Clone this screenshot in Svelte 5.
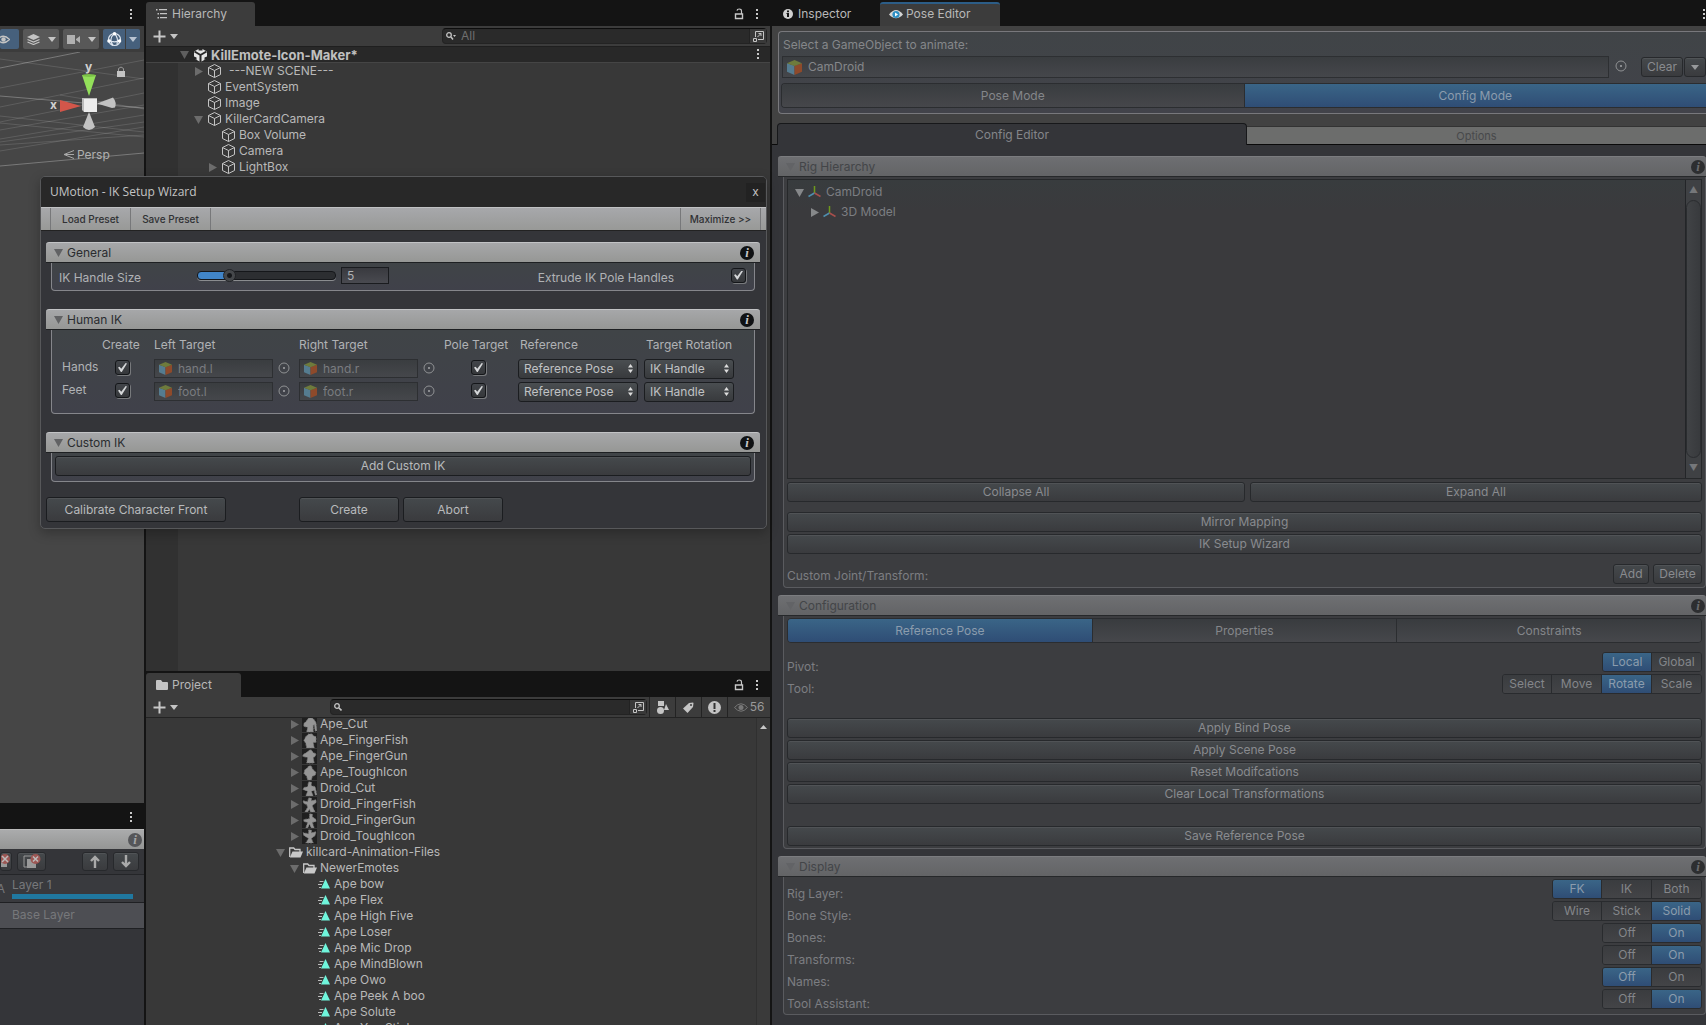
<script>
  const hierarchy = [
    { name: '---NEW SCENE---', level: 1, arrow: 'right', spaced: true },
    { name: 'EventSystem', level: 1 },
    { name: 'Image', level: 1 },
    { name: 'KillerCardCamera', level: 1, arrow: 'down' },
    { name: 'Box Volume', level: 2 },
    { name: 'Camera', level: 2 },
    { name: 'LightBox', level: 2, arrow: 'right' },
  ];

  const models = [
    ['Ape_Cut', 'M5 4l2-3h4l2 2 2 3 1 9h-2l-1-7-1 1v7H5l1-5-4-1v-3z'],
    ['Ape_FingerFish', 'M4 4l3-3h4l1 2 3 1v6h-3l1 6H5l-1-5-2-3z'],
    ['Ape_FingerGun', 'M6 3l2-2h2l2 3 3 1-1 3-2 1 1 6H5l1-6-5-1V6z'],
    ['Ape_ToughIcon', 'M6 3l1-2h3l1 3 4 4-1 3-3 1-1 4H6l-1-4-3-3 1-4z'],
    ['Droid_Cut', 'M7 1h3v4l4 1 2 9h-2l-1-5-3 1 2 5H4l2-5-5-2 1-2 4-1z'],
    ['Droid_FingerFish', 'M7 1h3v3l5-1v3l-4 3 1 3 2 4H9l-1-3-2 3H3l3-5-1-3-3-1-1-3 5 1z'],
    ['Droid_FingerGun', 'M8 1h3v3l4 3v2l-4 1 2 6h-3l-2-4-2 4H4l2-6-4-1V7l6-1z'],
    ['Droid_ToughIcon', 'M7 1h3v3l5-1-1 4-4 3 2 5H4l3-5-5-3-1-3 6 1z'],
  ];

  const clips = [
    'Ape bow', 'Ape Flex', 'Ape High Five', 'Ape Loser', 'Ape Mic Drop',
    'Ape MindBlown', 'Ape Owo', 'Ape Peek A boo', 'Ape Solute', 'Ape You Stink',
  ];

  const limbs = [
    { name: 'Hands', left: 'hand.l', right: 'hand.r' },
    { name: 'Feet', left: 'foot.l', right: 'foot.r' },
  ];

  const display = [
    { label: 'Rig Layer:', options: ['FK', 'IK', 'Both'], on: 'FK' },
    { label: 'Bone Style:', options: ['Wire', 'Stick', 'Solid'], on: 'Solid' },
    { label: 'Bones:', options: ['Off', 'On'], on: 'On' },
    { label: 'Transforms:', options: ['Off', 'On'], on: 'On' },
    { label: 'Names:', options: ['Off', 'On'], on: 'Off' },
    { label: 'Tool Assistant:', options: ['Off', 'On'], on: 'On' },
  ];

  const pivots = [
    { label: 'Pivot:', options: ['Local', 'Global'], on: 'Local' },
    { label: 'Tool:', options: ['Select', 'Move', 'Rotate', 'Scale'], on: 'Rotate' },
  ];
</script>

{#snippet kebab()}
  <button class="bare kebab" aria-label="More">
    <svg width="3" height="11" viewBox="0 0 3 11"><path d="M0 0h2v2H0zM0 4h2v2H0zM0 8h2v2H0z" fill="#c8c8c8" /></svg>
  </button>
{/snippet}

{#snippet lock()}
  <button class="bare" aria-label="Lock">
    <svg width="10" height="12" viewBox="0 0 10 12" fill="none" stroke="#c8c8c8"><path d="M1.500 6h7v4.500h-7z" stroke-width="1.400" /><path d="M7.500 6V3.200Q7.500 1 5.200 1 3.200 1 3 2.600" stroke-width="1.200" /></svg>
  </button>
{/snippet}

{#snippet cube()}
  <svg width="15" height="16" viewBox="0 0 15 16" fill="none" stroke="#c4c4c4"><path d="M7.500 1.500L13.500 4.500v7l-6 3-6-3v-7zM1.500 4.500l6 3 6-3M7.500 7.500v7" stroke-linejoin="round" /></svg>
{/snippet}

{#snippet prefab(size)}
  <svg width={size} height={size} viewBox="0 0 16 16"><path d="M0 3.500L8 6v10l-8-3.500z" fill="#557c90" /><path d="M16 3.500L8 6v10l8-3.500z" fill="#8e4a2b" /><path d="M8 0l8 3.500L8 6.500 0 3.500z" fill="#6e7b3c" /></svg>
{/snippet}

{#snippet arrow(dir)}
  <svg class="arrow" width="9" height="9" viewBox="0 0 9 9"><path d={dir === 'down' ? 'M0 1h9L4.500 9z' : 'M1 0v9l8-4.500z'} fill="currentColor" /></svg>
{/snippet}

{#snippet drop(color)}
  <svg width="8" height="5" viewBox="0 0 8 5"><path d="M0 0h8L4 5z" fill={color} /></svg>
{/snippet}

{#snippet picker()}
  <button class="bare" aria-label="Pick object">
    <svg width="12" height="12" viewBox="0 0 12 12"><circle cx="6" cy="6" r="5" fill="none" stroke="#909294" /><circle cx="6" cy="6" r="1" fill="#a4a6a8" /></svg>
  </button>
{/snippet}

{#snippet info()}
  <button class="info" aria-label="Help"><i>i</i></button>
{/snippet}

{#snippet axes()}
  <svg width="13" height="12" viewBox="0 0 13 12" fill="none" stroke-width="1.500"><path d="M6.500 7V0" stroke="#6f9a1c" /><path d="M6.500 7L.5 10.500" stroke="#4f8fae" /><path d="M6.500 7l6 3.500" stroke="#a84f4c" /></svg>
{/snippet}

{#snippet popout()}
  <button class="bare" aria-label="Open search window">
    <svg width="13" height="13" viewBox="0 0 13 13" fill="none" stroke="#c4c4c4"><path d="M3.500 7V1.500h8v8H6" /><path d="M1.500 8.500h3v3h-3z" /><path d="M5.500 7l3.500-3.500M6.500 3.500H9V6" /></svg>
  </button>
{/snippet}

{#snippet plus()}
  <button class="bare plus" aria-label="Create">
    <svg width="13" height="13" viewBox="0 0 13 13"><path d="M6.500 .5v12M.5 6.500h12" stroke="#c8c8c8" stroke-width="2" /></svg>
    {@render drop('#c4c4c4')}
  </button>
{/snippet}

{#snippet segments(row)}
  <div class="segments">
    {#each row.options as option}
      <button class:on={option === row.on}>{option}</button>
    {/each}
  </div>
{/snippet}

<main>
  <section class="scene">
    <div class="strip end">{@render kebab()}</div>
    <div class="tools">
      <button class="tool blue first" aria-label="Visibility"><svg width="13" height="9" viewBox="0 0 13 9"><path d="M.5 4.500Q6-2 12.500 4.500 6 11 .5 4.500z" fill="none" stroke="#c4c4c4" stroke-width="1.300" /><circle cx="6.500" cy="4.500" r="2.200" fill="#c4c4c4" /></svg></button>
      <button class="tool" aria-label="Layers"><svg width="13" height="11" viewBox="0 0 13 11"><path d="M6.500 0L13 3 6.500 6 0 3z" fill="#c4c4c4" /><path d="M.5 5.500l6 2.500 6-2.500M.5 8l6 2.500 6-2.500" fill="none" stroke="#c4c4c4" stroke-width="1.200" /></svg>{@render drop('#c4c4c4')}</button>
      <button class="tool" aria-label="Camera"><svg width="13" height="9" viewBox="0 0 13 9"><path d="M0 0h8v9H0zM9 4l4-3v7L9 5z" fill="#b0b0b0" /></svg>{@render drop('#c4c4c4')}</button>
      <div class="pair">
        <button class="tool blue" aria-label="Gizmos"><svg width="15" height="15" viewBox="0 0 15 15" fill="none" stroke="#dce4ee" stroke-width="1.200"><circle cx="7.500" cy="7.500" r="6" /><path d="M7.500 1.500C3 5 3 10 6 13.500M7.500 1.500c3 3 3.500 7 2.500 11M1.500 8c4 2.500 8 2.500 12 0" /><g fill="#fff" stroke="none"><circle cx="7.500" cy="1.800" r="1.800" /><circle cx="2" cy="9" r="1.800" /><circle cx="12.500" cy="9" r="1.800" /></g></svg></button>
        <button class="tool blue" aria-label="Gizmo options">{@render drop('#b9c4d2')}</button>
      </div>
    </div>
    <div class="view">
      <svg class="grid" viewBox="0 0 144 120" preserveAspectRatio="none" fill="none" stroke="#fff" stroke-width="1">
        <path opacity=".28" d="M0 16L80 0M0 44l144 12M0 114l144-13" />
        <path opacity=".13" d="M0 7l144 20M0 36L144 8M0 55L144 26M0 70L144 41M0 78l144-25M0 87l144-24M0 99l144-24M0 90l144-20M0 71l144 14M0 64l144 16M0 93l144-10M60 43l84 14" />
      </svg>
      <svg class="gizmo" width="144" height="120" viewBox="0 0 144 120">
        <path d="M82 23h14l-7 21z" fill="#93e05a" /><ellipse cx="89" cy="23.500" rx="7" ry="1.500" fill="#7cc348" />
        <path d="M60 48v12l21-6z" fill="#d2564a" />
        <path d="M97 51.500l16-6q4 5 2 10l-3 .5z" fill="#c2c2c2" />
        <path d="M89 60l-6 15q6 6 12 0z" fill="#c2c2c2" />
        <path d="M82 46h15v14H84l-2-2z" fill="#bbb" /><path d="M84 47h13v13H84z" fill="#ececec" />
        <g class="axis"><text x="85" y="19">y</text><text x="50" y="57">x</text></g>
        <path d="M117 19h8v6h-8z" fill="#c4c4c4" /><path d="M118.500 19v-2.500q2.500-3 5 0V19" fill="none" stroke="#999" />
        <path d="M74 98.500l-10 4 10 4M64 102.500h10" fill="none" stroke="#a8a8a8" />
        <text class="persp" x="77" y="107">Persp</text>
      </svg>
    </div>
    <div class="strip end">{@render kebab()}</div>
    <div class="layers">
      <div class="layerhead">{@render info()}</div>
      <div class="layertools">
        <button class="btn cut" aria-label="Delete layer"><svg width="10" height="16" viewBox="0 0 10 16"><path d="M0 6h6v7H0z" fill="#999" /><circle cx="4" cy="5" r="5" fill="#9c5754" /><path d="M1 2l6 6M7 2L1 8" stroke="#bbb" stroke-width="1.500" /></svg></button>
        <button class="btn two" aria-label="Delete all layers"><svg width="18" height="16" viewBox="0 0 18 16"><path d="M1 2h9v11H1z" fill="none" stroke="#999" /><path d="M4 5h9v9H4z" fill="#999" /><circle cx="12.500" cy="5" r="5" fill="#9c5754" /><path d="M10 2.500l5 5M15 2.500l-5 5" stroke="#bbb" stroke-width="1.500" /></svg></button>
        <button class="btn up" aria-label="Move up"><svg width="10" height="13" viewBox="0 0 10 13"><path d="M5 13V2M1 6l4-4 4 4" fill="none" stroke="#aaa" stroke-width="2.400" /></svg></button>
        <button class="btn" aria-label="Move down"><svg width="10" height="13" viewBox="0 0 10 13"><path d="M5 0v11M1 7l4 4 4-4" fill="none" stroke="#aaa" stroke-width="2.400" /></svg></button>
      </div>
      <div class="layer"><b>A</b><div><span>Layer 1</span><hr /></div></div>
      <div class="layer base"><span>Base Layer</span></div>
    </div>
  </section>

  <section class="middle">
    <div class="strip">
      <button class="tab"><svg width="11" height="10" viewBox="0 0 11 10"><path d="M0 0h1.500v1.500H0zM3 0h8v1.300H3zM1.500 4H3v1.500H1.500zM4 4h7v1.300H4zM1.500 8H3v1.500H1.500zM4 8h7v1.300H4z" fill="#c4c4c4" /></svg>Hierarchy</button>
      <span class="fill"></span>{@render lock()}{@render kebab()}
    </div>
    <div class="bar">
      {@render plus()}
      <div class="search hs">
        <svg width="10" height="8" viewBox="0 0 10 8" fill="none" stroke="#c4c4c4"><circle cx="3" cy="3" r="2.300" stroke-width="1.300" /><path d="M5 5l2 2.500" stroke-width="1.500" /><path d="M7 3h3L8.500 5z" fill="#c4c4c4" stroke="none" /></svg>
        <input placeholder="All" aria-label="Search hierarchy" />{@render popout()}
      </div>
    </div>
    <div class="sceneRow">
      {@render arrow('down')}
      <svg width="13" height="14" viewBox="0 0 13 14"><path d="M6.500 0L13 3.500v7L6.500 14 0 10.500v-7z" fill="#e6e6e6" /><path d="M6.500 7V14M6.500 7L.5 3.500M6.500 7l6-3.500" stroke="#282828" stroke-width="2" /><path d="M4.500 0h4v2.500h-4zM0 8.500l2.500 1V12L0 11zM13 8.500l-2.500 1V12l2.500-1z" fill="#282828" /></svg>
      <strong>KillEmote-Icon-Maker*</strong><span class="fill"></span>{@render kebab()}
    </div>
    <ul class="tree hierarchy">
      {#each hierarchy as row}
        <li class="level{row.level}">
          <span class="slot">{#if row.arrow}{@render arrow(row.arrow)}{/if}</span>{@render cube()}<span class:spaced={row.spaced}>{row.name}</span>
        </li>
      {/each}
    </ul>
    <div class="strip">
      <button class="tab project"><svg width="12" height="10" viewBox="0 0 12 10"><path d="M0 1q0-1 1-1h4l1.500 2H11q1 0 1 1v6q0 1-1 1H1q-1 0-1-1z" fill="#c4c4c4" /></svg>Project</button>
      <span class="fill"></span>{@render lock()}{@render kebab()}
    </div>
    <div class="bar">
      {@render plus()}
      <div class="search ps">
        <svg width="8" height="8" viewBox="0 0 8 8" fill="none" stroke="#c4c4c4"><circle cx="3" cy="3" r="2.300" stroke-width="1.300" /><path d="M5 5l2.500 2.500" stroke-width="1.600" /></svg>
        <input aria-label="Search project" />{@render popout()}
      </div>
      <div class="filters">
        <button class="bare" aria-label="Filter by type"><svg width="12" height="13" viewBox="0 0 12 13" fill="#c4c4c4"><path d="M1 0h6v5H1zM9 3l3 6H7z" /><circle cx="3.500" cy="9.500" r="3.500" /></svg></button>
        <button class="bare" aria-label="Filter by label"><svg width="11" height="11" viewBox="0 0 11 11"><path d="M6 1l4-.5.5.5L10 5l-5.500 6L0 6.500z" fill="#c4c4c4" /><circle cx="8" cy="3" r="1" fill="#3c3c3c" /></svg></button>
        <button class="bare" aria-label="Filter by problem"><svg width="13" height="13" viewBox="0 0 13 13"><circle cx="6.500" cy="6.500" r="6.500" fill="#c4c4c4" /><path d="M5.500 2h2v6h-2zM5.500 9h2v2h-2z" fill="#333" /></svg></button>
        <button class="bare count"><svg width="14" height="9" viewBox="0 0 14 9"><path d="M.5 4.500Q7-3 13.500 4.500 7 12 .5 4.500z" fill="none" stroke="#777" /><circle cx="7" cy="4.500" r="2.500" fill="#777" /></svg>56</button>
      </div>
    </div>
    <div class="project-body">
      <ul class="tree files">
        {#each models as [name, shape]}
          <li class="model"><span class="slot">{@render arrow('right')}</span>
            <svg class="thumb" width="15" height="15" viewBox="0 0 16 16"><path d={shape} fill="#959595" stroke="#777" stroke-width=".8" stroke-dasharray="2 1" /></svg><span>{name}</span></li>
        {/each}
        {#each ['killcard-Animation-Files', 'NewerEmotes'] as name, i}
          <li class={i ? 'folder inner' : 'folder'}><span class="slot">{@render arrow('down')}</span>
            <svg width="14" height="11" viewBox="0 0 14 11"><path d="M.7 10V1h4l1.300 1.500h5V5" fill="none" stroke="#c8c8c8" stroke-width="1.300" /><path d="M3.500 4.500H14L11.500 10.500H.8z" fill="#c8c8c8" /></svg><span>{name}</span></li>
        {/each}
        {#each clips as name}
          <li class="clip"><svg width="12" height="10" viewBox="0 0 12 10"><path d="M1.500 2.500h4M0 5.500h4M1 8.500h2" stroke="#bbb" /><path d="M7.500 0L12 9.500H3z" fill="#6ff5dc" /></svg><span>{name}</span></li>
        {/each}
      </ul>
      <div class="gutter"><svg width="7" height="4" viewBox="0 0 7 4"><path d="M0 4h7L3.500 0z" fill="#c8c8c8" /></svg></div>
    </div>
  </section>

  <section class="pose">
    <div class="strip">
      <button class="tab plain"><svg width="10" height="10" viewBox="0 0 10 10"><circle cx="5" cy="5" r="5" fill="#d0d0d0" /><path d="M4 1.500h2v1.700H4zM3.500 4H6v4H4V5h-.5z" fill="#141414" /></svg>Inspector</button>
      <button class="tab active"><svg width="14" height="10" viewBox="0 0 14 10"><path d="M0 5.500Q7-3.500 14 5.500 7 13 0 5.500z" fill="#d6d6d6" /><circle cx="7" cy="5.500" r="3.600" fill="#2d8fc4" /><path d="M6 3.500l3 2-3 2z" fill="#fff" /></svg>Pose Editor</button>
      <span class="fill"></span>{@render kebab()}
    </div>
    <div class="top">
      <div class="target">
        <label for="target">Select a GameObject to animate:</label>
        <div class="line">
          <span class="object big">{@render prefab(15)}<input id="target" value="CamDroid" readonly /></span>
          {@render picker()}
          <button class="btn clear">Clear</button>
          <button class="btn more" aria-label="Recent objects">{@render drop('#97999b')}</button>
        </div>
        <div class="modes"><button>Pose Mode</button><button class="on">Config Mode</button></div>
      </div>
      <div class="pages"><button class="current">Config Editor</button><button>Options</button></div>
    </div>
    <div class="config">
      <div class="head">{@render arrow('down')}<span>Rig Hierarchy</span>{@render info()}</div>
      <div class="box">
        <div class="rig">
          <ul>
            <li>{@render arrow('down')}{@render axes()}<span>CamDroid</span></li>
            <li class="child">{@render arrow('right')}{@render axes()}<span>3D Model</span></li>
          </ul>
          <div class="scroll"><button aria-label="Scroll up">▲</button><span class="knob"></span><button aria-label="Scroll down">▼</button></div>
        </div>
        <div class="split"><button class="btn">Collapse All</button><button class="btn">Expand All</button></div>
        <div class="stack"><button class="btn">Mirror Mapping</button><button class="btn">IK Setup Wizard</button></div>
        <div class="joint"><span>Custom Joint/Transform:</span><button class="btn add">Add</button><button class="btn delete">Delete</button></div>
      </div>
      <div class="head">{@render arrow('down')}<span>Configuration</span>{@render info()}</div>
      <div class="box">
        <div class="modes three"><button class="on">Reference Pose</button><button>Properties</button><button>Constraints</button></div>
        <div class="options">
          {#each pivots as row}<div class="option"><span>{row.label}</span>{@render segments(row)}</div>{/each}
        </div>
        <div class="stack poses">
          <button class="btn">Apply Bind Pose</button><button class="btn">Apply Scene Pose</button>
          <button class="btn">Reset Modifcations</button><button class="btn">Clear Local Transformations</button>
        </div>
        <div class="stack"><button class="btn">Save Reference Pose</button></div>
      </div>
      <div class="head">{@render arrow('down')}<span>Display</span>{@render info()}</div>
      <div class="box">
        <div class="options last">
          {#each display as row}<div class="option"><span>{row.label}</span>{@render segments(row)}</div>{/each}
        </div>
      </div>
    </div>
  </section>

  <section class="wizard" aria-label="UMotion - IK Setup Wizard">
    <header><h1>UMotion - IK Setup Wizard</h1><button class="bare" aria-label="Close">x</button></header>
    <nav><i></i><button>Load Preset</button><button>Save Preset</button><span class="fill"></span><button class="max">Maximize &gt;&gt;</button><i></i></nav>
    <div class="content">
      <div class="head">{@render arrow('down')}<span>General</span>{@render info()}</div>
      <div class="box general">
        <label for="size">IK Handle Size</label>
        <input id="size" type="range" min="0" max="25" value="5" />
        <input class="number" value="5" aria-label="IK Handle Size value" />
        <span class="fill"></span>
        <label for="extrude">Extrude IK Pole Handles</label>
        <input id="extrude" type="checkbox" checked />
      </div>
      <div class="head">{@render arrow('down')}<span>Human IK</span>{@render info()}</div>
      <div class="box human">
        <table>
          <colgroup><col class="c1" /><col class="c2" /><col class="c3" /><col class="c3" /><col class="c4" /><col class="c5" /><col /></colgroup>
          <thead><tr><td></td><th>Create</th><th>Left Target</th><th>Right Target</th><th>Pole Target</th><th>Reference</th><th>Target Rotation</th></tr></thead>
          <tbody>
            {#each limbs as limb}
              <tr>
                <th>{limb.name}</th>
                <td class="mid"><input type="checkbox" checked aria-label="Create {limb.name}" /></td>
                {#each [limb.left, limb.right] as bone}
                  <td><div class="pick"><span class="object">{@render prefab(13)}<input value={bone} readonly aria-label="Target {bone}" /></span>{@render picker()}</div></td>
                {/each}
                <td class="mid pole"><input type="checkbox" checked aria-label="Pole target {limb.name}" /></td>
                <td><div class="select"><select aria-label="Reference {limb.name}"><option>Reference Pose</option></select><svg width="5" height="9" viewBox="0 0 5 9"><path d="M0 3.500L2.500 0 5 3.500zM0 5.500h5L2.500 9z" fill="#ddd" /></svg></div></td>
                <td><div class="select narrow"><select aria-label="Target rotation {limb.name}"><option>IK Handle</option></select><svg width="5" height="9" viewBox="0 0 5 9"><path d="M0 3.500L2.500 0 5 3.500zM0 5.500h5L2.500 9z" fill="#ddd" /></svg></div></td>
              </tr>
            {/each}
          </tbody>
        </table>
      </div>
      <div class="head">{@render arrow('down')}<span>Custom IK</span>{@render info()}</div>
      <div class="box custom"><button class="btn">Add Custom IK</button></div>
      <footer><button class="btn calibrate">Calibrate Character Front</button><button class="btn">Create</button><button class="btn">Abort</button></footer>
    </div>
  </section>
</main>

<style>
  :global(body) { background: #141414; }
  main, main * { box-sizing: border-box; }
  main {
    position: relative; display: grid; grid-template-columns: 144fr 624fr 934fr; gap: 2px;
    height: 100vh; overflow: hidden; background: #141414; color: #b8b8b8;
    font: 12px/16px Inter, "Liberation Sans", sans-serif;
  }
  button, input, select { font: inherit; color: inherit; margin: 0; padding: 0; border: 0; background: none; min-width: 0; }
  button { white-space: nowrap; }
  svg { display: block; flex: none; }
  ul { list-style: none; margin: 0; padding: 0; }
  section { display: flex; flex-direction: column; min-width: 0; min-height: 0; overflow: hidden; }
  .fill { flex: 1; }
  .bare { display: flex; align-items: center; justify-content: center; }

  .strip { display: flex; align-items: flex-end; flex: none; height: 26px; background: #141414; }
  .strip .bare { height: 24px; }
  .strip .kebab { margin: 0 11px 0 12px; }
  .end { justify-content: flex-end; }
  .tab { display: flex; align-items: center; gap: 5px; width: 109px; height: 24px; padding: 0 0 0 10px; border-radius: 3px 3px 0 0; background: #3c3c3c; }
  .tab.project { width: 95px; gap: 4px; }

  .tools { display: flex; align-items: center; gap: 4px; flex: none; height: 26px; background: #3c3c3c; }
  .tool { display: flex; align-items: center; justify-content: center; gap: 8px; width: 36px; height: 20px; border-radius: 2px; background: #585858; }
  .tool.blue { background: #46607c; }
  .tool.first { width: 19px; justify-content: flex-start; overflow: hidden; }
  .tool.first svg { margin-left: -3px; }
  .pair { display: flex; gap: 1px; }
  .pair .tool { width: 22px; border-radius: 2px 0 0 2px; }
  .pair .tool:last-child { width: 14px; border-radius: 0 2px 2px 0; }
  .view { display: grid; flex: 1; align-items: start; background: #464646; min-height: 0; }
  .view svg { grid-area: 1 / 1; }
  .grid { width: 100%; height: 120px; }
  .gizmo text { font-size: 12px; fill: #b0b0b0; }
  .gizmo .axis text { font-weight: 700; fill: #d0d0d0; }
  .layers { flex: none; height: 196px; background: #343539; color: #77787b; }
  .layerhead { display: flex; align-items: center; justify-content: flex-end; height: 20px; padding-right: 2px; background: linear-gradient(#aaabac, #959695); border-top: 1px solid #bbb; }
  .layerhead .info { background: #555659; color: #a5a6a7; }
  .layertools { display: flex; gap: 5px; height: 26px; padding: 3px 5px 4px 0; border-bottom: 1px solid #242528; }
  .layertools .btn { width: 26px; height: 19px; }
  .layertools .cut { width: 11px; }
  .layertools .two { width: 29px; }
  .layertools .up { margin-left: auto; }
  .layer { display: flex; height: 28px; padding: 2px 11px 0 0; gap: 7px; border-bottom: 1px solid #1f2023; background: #393a3e; }
  .layer b { width: 5px; font-weight: 400; display: flex; justify-content: flex-end; padding-top: 4px; }
  .layer div { flex: 1; }
  .layer hr { height: 5px; margin: 1px 0 0; border: 0; background: #2078a0; }
  .layer.base { background: #4d4e53; padding: 4px 0 0 12px; height: 26px; }

  .bar { display: flex; align-items: center; flex: none; height: 20px; background: #3c3c3c; }
  .plus { gap: 4px; padding-left: 7px; }
  .search { display: flex; align-items: center; gap: 5px; height: 16px; border-radius: 4px; border: 1px solid #232323; border-top-color: #0d0d0d; background: #2a2a2a; }
  .search > svg { margin-left: 3px; }
  .search input { flex: 1; outline: 0; height: 14px; }
  .search input::placeholder { color: #6f6f6f; opacity: 1; }
  .search .bare { width: 17px; height: 14px; background: #393939; border-left: 1px solid #222; }
  .hs { flex: 1; margin: 0 3px 0 264px; }
  .ps { flex: 1; margin: 0 2px 0 152px; }
  .filters { display: flex; align-self: stretch; }
  .filters .bare { width: 26px; border-left: 1px solid #232323; }
  .filters .count { width: 43px; gap: 2px; color: #999; }

  .sceneRow { display: flex; align-items: center; gap: 5px; flex: none; height: 17px; padding-left: 34px; border-top: 1px solid #1f1f1f; border-bottom: 1px solid #454545; background: #282828; color: #5f5f5f; }
  .sceneRow strong { margin-left: -1px; color: #c0c0c0; font-size: 13px; }
  .sceneRow .kebab { margin-right: 10px; }
  .tree li { display: flex; align-items: center; height: 16px; white-space: nowrap; }
  .slot { width: 9px; display: flex; color: #6c6c6c; }
  .tree.hierarchy { flex: 608 0 0; overflow: hidden; background: linear-gradient(90deg, #313131 32px, #383838 32px); }
  .hierarchy li { padding-left: 48px; gap: 3px; }
  .hierarchy .level2 { padding-left: 62px; }
  .hierarchy .slot { margin-right: 1px; }
  .hierarchy .spaced { margin-left: 4px; }
  .project-body { display: flex; flex: 307 0 0; min-height: 0; border-top: 1px solid #232323; background: #383838; }
  .files { flex: 1; overflow: hidden; padding-top: 0; }
  .files li:first-child { margin-top: -2px; }
  .files .model { padding-left: 144px; gap: 3px; }
  .files .folder { padding-left: 130px; gap: 3px; }
  .files .folder .slot { width: 10px; }
  .files .folder.inner { padding-left: 144px; }
  .files .clip { padding-left: 172px; gap: 4px; }
  .thumb { background: #1f1f1f; }
  .gutter { width: 14px; padding: 7px 0 0 3px; border-left: 1px solid #303030; background: #3a3a3a; }

  .btn {
    display: flex; align-items: center; justify-content: center; height: 20px; padding: 0 5px;
    border: 1px solid #27292c; border-radius: 3px; color: #898b8f;
    background: linear-gradient(#45494c, #3a3b3e); box-shadow: inset 0 1px #505356;
  }
  .info { flex: none; display: flex; align-items: center; justify-content: center; width: 14px; height: 14px; border-radius: 50%; background: #101214; color: #c4c6c8; }
  .info i { font: italic 700 13px/14px "Liberation Serif", serif; }

  .pose { background: #424242; }
  .pose .tab.plain { width: 108px; background: none; padding-left: 11px; }
  .pose .tab.active { width: 120px; border-top: 2px solid #2c5d87; padding: 0 0 2px 9px; gap: 3px; }
  .pose .strip .kebab { margin-right: 0; }
  .top { display: flex; flex-direction: column; gap: 9px; flex: none; padding: 5px 0 0 6px; color: #85878a; }
  .target { display: grid; border: 1px solid #78787c; border-right: 0; border-radius: 4px 0 0 4px; padding: 5px 0 5px 2px; background: linear-gradient(#404447, #42434a); }
  .target label { padding: 0 0 3px 2px; }
  .line { display: flex; align-items: center; height: 22px; margin: 0 0 5px 1px; }
  .object { display: flex; align-items: center; gap: 6px; width: 119px; height: 19px; padding-left: 4px; border: 1px solid #2d2f32; background: linear-gradient(#3a3d40, #45474b); color: #7a7c80; }
  .object input { flex: 1; width: 40px; outline: 0; }
  .object.big { flex: 1; height: 22px; color: #85878a; }
  .line .bare { margin: 0 14px 3px 6px; }
  .clear { width: 42px; }
  .more { width: 22px; margin-left: 1px; }
  .modes { display: flex; height: 25px; border: 1px solid #2b2d30; border-right: 0; border-radius: 4px 0 0 4px; overflow: hidden; }
  .modes button { flex: 1; background: linear-gradient(#393c3f, #46474b); color: #84868a; border-right: 1px solid #2b2d30; }
  .modes button:last-child { border-right: 0; }
  .modes .on, .segments .on { background: linear-gradient(#3a6587, #2f4d75); color: #8b9cad; }
  .modes.three { border-right: 1px solid #2b2d30; border-radius: 4px; }
  .pages { display: flex; align-items: flex-end; height: 22px; margin-left: -6px; padding-left: 5px; background: linear-gradient(transparent 21px, #0a0a0a 21px); }
  .pages button { flex: 460; height: 19px; background: #6c6d6c; color: #48494b; font-size: 11px; border: 1px solid #333; border-width: 1px 0; border-bottom-color: #0a0a0a; }
  .pages .current { flex: 469; height: 22px; border: 1px solid #17181a; border-bottom: 0; border-radius: 4px 4px 0 0; background: #343539; color: #84868a; font-size: 12px; }

  .config { flex: 1; padding: 11px 0 0 6px; background: #343539; color: #7c7e82; min-height: 0; }
  .head { display: flex; align-items: center; height: 21px; padding: 0 5px 0 8px; border-top: 1px solid #c2c3c5; border-bottom: 1px solid #1e2022; border-radius: 3px 3px 0 0; background: linear-gradient(#a6a7a9, #969795); color: #2a2c2f; }
  .head .arrow { color: #616264; margin-right: 4px; }
  .head span { flex: 1; }
  .config .head { padding-right: 1px; border-top-color: #7b7c7f; border-bottom-color: #26282a; background: linear-gradient(#6e6f72, #636466); color: #434548; }
  .config .head .arrow { color: #626366; }
  .config .info { background: #2d2e30; color: #696a6d; }
  .box { margin: 0 8px 18px 5px; border: 1px solid #85868b; border-top: 0; border-radius: 0 0 4px 4px; background: linear-gradient(#404447, #40414a); }
  .config .box { margin: 0 0 7px 5px; padding: 2px 3px; border-color: #5a5b5f; background: #3c3d40; }
  .rig { display: flex; height: 300px; border: 1px solid #26282a; background: linear-gradient(#383c3e, #3a3a3d 30px); }
  .rig ul { flex: 1; padding: 2px 0 0 7px; }
  .rig li { display: flex; align-items: center; height: 20px; gap: 4px; }
  .rig li .arrow { color: #86888a; }
  .rig .child { padding-left: 15px; }
  .rig li span { margin-left: 1px; }
  .scroll { display: flex; flex-direction: column; width: 16px; border-left: 1px solid #232528; background: #3f4144; color: #75777a; }
  .scroll button { height: 20px; font-size: 9px; }
  .knob { flex: 1; border: 1px solid #2a2c2f; border-radius: 8px; background: linear-gradient(90deg, #414346, #383a3d); }
  .split { display: grid; grid-template-columns: 458fr 452fr; gap: 5px; margin: 3px 0 10px; }
  .stack { display: grid; gap: 2px; }
  .joint { display: flex; gap: 4px; align-items: center; margin-top: 9px; padding-bottom: 1px; }
  .joint span { flex: 1; padding-top: 5px; }
  .add { width: 36px; }
  .delete { width: 49px; }
  .options { display: grid; gap: 2px; margin: 9px 0 24px; }
  .options.last { margin: 0 0 3px; }
  .option { display: flex; justify-content: space-between; height: 20px; }
  .option > span { padding-top: 7px; margin-bottom: -7px; }
  .segments { display: flex; border: 1px solid #292b2e; border-radius: 3px; overflow: hidden; }
  .segments button { width: 50px; border-right: 1px solid #292b2e; background: linear-gradient(#3a3c3f, #434447); color: #84868a; }
  .segments button:first-child { width: 49px; }
  .segments button:last-child { width: 49px; border-right: 0; }
  .segments button.on { color: #8b9cad; background: linear-gradient(#3a6587, #2f4d75); }
  .poses { margin-bottom: 22px; }

  .wizard { position: absolute; left: 40px; top: 176px; width: 727px; border: 1px solid #57585a; border-radius: 5px; background: #343539; color: #b0b2b5; box-shadow: 0 4px 12px #0004; }
  .wizard header { display: flex; align-items: center; height: 30px; background: #282828; color: #c4c4c4; }
  h1 { flex: 1; margin: 0 0 0 9px; font: 12px/16px "Open Sans", sans-serif; }
  header .bare { width: 19px; height: 19px; margin-right: 1px; background: #222; font: 12px/14px "Liberation Sans", sans-serif; }
  nav { display: flex; height: 24px; border-top: 1px solid #c0c1c3; border-bottom: 1px solid #222; background: linear-gradient(#a7a8ab, #989997); color: #303134; }
  nav i { width: 9px; }
  nav i:last-child { width: 5px; }
  nav button { width: 80px; font-size: 10px; font-weight: 500; border-left: 1px solid #77787a; }
  nav button:nth-of-type(2) { width: 81px; border-right: 1px solid #77787a; }
  nav .max { border-right: 1px solid #77787a; width: 81px; }
  .content { padding: 11px 6px 6px 5px; }
  .content .box { margin-right: 5px; }
  .content .btn { color: #b8babc; border-color: #1b1d20; }
  .content .info { margin-right: 1px; }
  .box.general { display: flex; align-items: center; height: 28px; padding: 0 7px; }
  .general label { padding-top: 2px; }
  [type="range"] { appearance: none; width: 139px; height: 13px; margin: 0 5px 2px 56px; }
  .general label:first-child { width: 82px; white-space: nowrap; }
  [type="range"]::-webkit-slider-runnable-track { height: 9px; border: 1px solid #15171a; border-radius: 4px; background: linear-gradient(90deg, #4185c8 24%, #2c2e31 24%); box-shadow: 0 1px #8a8c8f; }
  [type="range"]::-webkit-slider-thumb { appearance: none; width: 13px; height: 13px; margin-top: -3px; border: 1px solid #222427; border-radius: 50%; background: radial-gradient(circle, #15171a 2px, #45484b 3px); }
  .number { width: 48px; height: 17px; margin-bottom: 2px; padding-left: 5px; border: 1px solid #1a1c1f; background: linear-gradient(#393a3f, #494a50); }
  [type="checkbox"] { appearance: none; display: grid; place-items: center; width: 15px; height: 15px; border: 1px solid #141619; border-radius: 3px; background: linear-gradient(#42454a, #36383b); box-shadow: 1px 1px #77797c; }
  [type="checkbox"]:checked::before { content: ""; width: 9px; height: 9px; background: #d4d6d8; clip-path: polygon(0 50%, 18% 42%, 36% 65%, 85% 0, 100% 5%, 42% 100%, 32% 100%); }
  .general [type="checkbox"] { margin: 0 1px 3px 57px; }
  .human { height: 84px; padding-top: 3px; }
  table { width: 100%; table-layout: fixed; border-collapse: collapse; }
  .c1 { width: 45px; } .c2 { width: 52px; } .c3 { width: 145px; } .c4 { width: 76px; } .c5 { width: 126px; }
  th, table td { padding: 0; font-weight: 400; text-align: left; white-space: nowrap; }
  thead th { height: 24px; padding-left: 5px; }
  tbody tr { height: 23px; }
  tbody th { padding: 0 0 4px 10px; }
  tbody td { vertical-align: middle; }
  .mid { padding: 0 0 2px 18px; }
  .mid.pole { padding-left: 32px; }
  .pick { display: flex; gap: 5px; align-items: center; padding-left: 5px; }
  .pick .bare { margin-bottom: 2px; }
  .select { display: grid; width: 120px; margin-left: 3px; align-items: center; }
  .select.narrow { width: 90px; }
  .select > * { grid-area: 1 / 1; }
  .select svg { justify-self: end; margin-right: 5px; pointer-events: none; }
  select { appearance: none; height: 20px; padding-left: 5px; border: 1px solid #1b1d20; border-radius: 3px; background: linear-gradient(#4a4e51, #383a3d); color: #c0c2c4; }
  .custom { padding: 3px 3px 5px; }
  .custom .btn { width: 100%; }
  .content .custom { margin-bottom: 15px; }
  footer { display: flex; gap: 4px; }
  footer .btn { width: 100px; height: 25px; }
  footer .calibrate { width: 180px; margin-right: 69px; }
</style>
